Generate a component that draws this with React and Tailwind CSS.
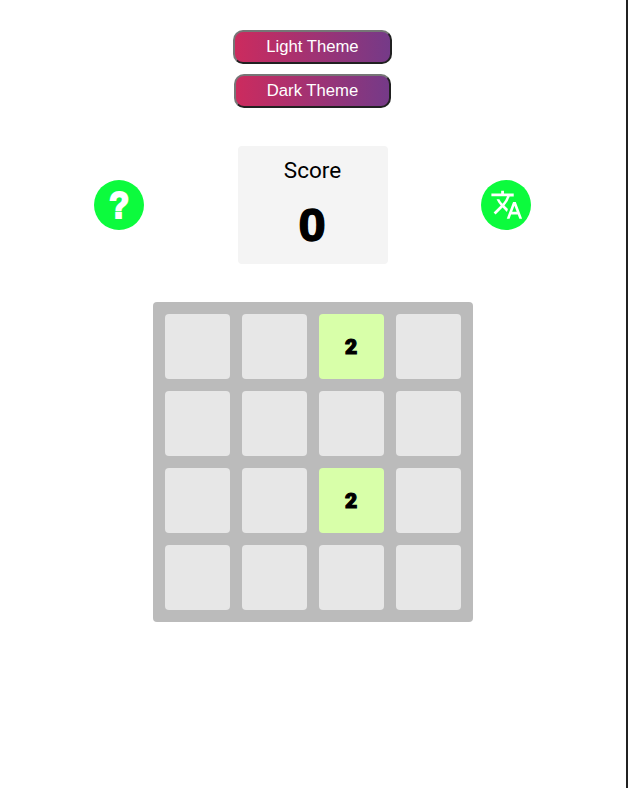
import { MdTranslate } from "react-icons/md";

const BOARD = [
  [0, 0, 2, 0],
  [0, 0, 0, 0],
  [0, 0, 2, 0],
  [0, 0, 0, 0],
];

const themeButton =
  "h-[34px] rounded-[10px] border-2 border-t-[#767676] border-l-[#767676] border-r-[#212121] border-b-[#212121] bg-linear-to-r/srgb from-[#cc2b5e] to-[#753a88] font-['Liberation_Sans',sans-serif] text-[16.67px] leading-none text-white";

function Tile({ value }) {
  return (
    <div
      className={
        "flex items-center justify-center rounded-[4px] pt-px pr-px font-['Roboto',sans-serif] text-[21px] font-black leading-none text-black [-webkit-text-stroke:1.2px_black] " +
        (value ? "bg-[#d8ffa9]" : "bg-[#e7e7e7]")
      }
    >
      {value ? value : null}
    </div>
  );
}

export default function App() {
  return (
    <div className="flex h-[788px] w-[628px] flex-col items-center overflow-hidden border-r-2 border-[#212121] bg-white pt-[30px]">
      <div className="flex flex-col items-center gap-2.5 pr-px">
        <button className={themeButton + " w-[159px]"}>Light Theme</button>
        <button className={themeButton + " w-[157px]"}>Dark Theme</button>
      </div>

      <div className="mt-[38px] flex w-full items-center justify-between pr-[95px] pl-[94px]">
        <button className="flex size-[50px] items-center justify-center rounded-full bg-[#0cfb3d] font-['Liberation_Sans',sans-serif] text-[37px] font-bold leading-none text-white [-webkit-text-stroke:2.2px_white]">
          <span className="inline-block scale-x-88">?</span>
        </button>
        <div className="flex h-[118px] w-[150px] flex-col items-center rounded-[4px] bg-[#f4f4f4] pt-[11px] text-black">
          <div className="font-['Roboto',sans-serif] text-[22.5px] leading-[27px]">Score</div>
          <div className="mt-[17px] scale-x-104 font-['Liberation_Sans',sans-serif] text-[47px] font-bold leading-[48px] [-webkit-text-stroke:1.4px_black]">
            0
          </div>
        </div>
        <button className="flex size-[50px] items-center justify-center rounded-full bg-[#0cfb3d] pl-px text-white">
          <MdTranslate className="size-[33.5px]" />
        </button>
      </div>

      <div className="mt-[38px] grid size-[320px] grid-cols-4 grid-rows-4 gap-3 rounded-[4px] bg-[#bbbbbb] p-3">
        {BOARD.flat().map((value, i) => (
          <Tile key={i} value={value} />
        ))}
      </div>
    </div>
  );
}
